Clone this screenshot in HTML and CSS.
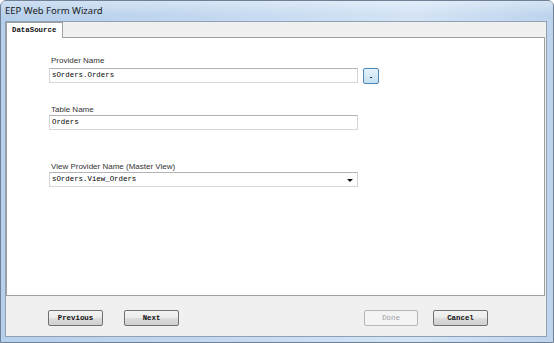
FILE: index.html
```html
<!DOCTYPE html>
<html>
<head>
<meta charset="utf-8">
<link rel="stylesheet" href="styles.css">
</head>
<body>
<div class="window">
  <div class="titlebar">EEP Web Form Wizard</div>
  <div class="client">
    <div class="tabstrip">
      <div class="tab">DataSource</div>
    </div>
    <div class="page">
      <div class="field">
        <div class="label">Provider Name</div>
        <div class="row">
          <div class="input">sOrders.Orders</div>
          <div class="browse"><span class="dot"></span></div>
        </div>
      </div>
      <div class="field f2">
        <div class="label">Table Name</div>
        <div class="row">
          <div class="input">Orders</div>
        </div>
      </div>
      <div class="field f3">
        <div class="label">View Provider Name (Master View)</div>
        <div class="row">
          <div class="input select">sOrders.View_Orders<span class="arrow"></span></div>
        </div>
      </div>
    </div>
    <div class="footer">
      <div class="btn">Previous</div>
      <div class="btn next">Next</div>
      <div class="spacer"></div>
      <div class="btn disabled">Done</div>
      <div class="btn cancel">Cancel</div>
    </div>
  </div>
</div>
</body>
</html>
```

FILE: styles.css
```css
html, body {
  margin: 0;
  padding: 0;
  width: 554px;
  height: 343px;
  overflow: hidden;
  background: #ffffff;
}
.window {
  box-sizing: border-box;
  width: 554px;
  height: 343px;
  display: flex;
  flex-direction: column;
  border: 1px solid #6f8197;
  border-radius: 6px 6px 0 0;
  background: linear-gradient(90deg, #b6cfeb 0%, #c4d9f0 40%, #d4e4f5 75%, #bdd4ed 100%);
}
.titlebar {
  height: 20px;
  line-height: 20px;
  padding-left: 4px;
  font-family: "Noto Sans", "Open Sans", sans-serif;
  font-size: 9.5px;
  color: #1b1b1b;
  background: linear-gradient(180deg, rgba(255,255,255,0.35), rgba(255,255,255,0) 70%);
}
.client {
  flex: 1;
  margin: 0 6px 5px 4px;
  background: #f0f0f0;
  border: 1px solid #8fa1b5;
  display: flex;
  flex-direction: column;
}
.tabstrip {
  height: 15px;
  display: flex;
  align-items: flex-end;
}
.tab {
  box-sizing: border-box;
  height: 16px;
  width: 57px;
  margin-bottom: -1px;
  background: #ffffff;
  border: 1px solid #a0a0a0;
  border-bottom: none;
  font-family: "Liberation Mono", monospace;
  font-size: 7.4px;
  font-weight: bold;
  line-height: 15px;
  padding-left: 5px;
  color: #111;
  position: relative;
  z-index: 1;
}
.page {
  height: 259px;
  box-sizing: border-box;
  background: #ffffff;
  border: 1px solid #a0a0a0;
  margin-right: 1px;
  padding: 18px 0 0 42px;
}
.field {
  display: flex;
  flex-direction: column;
}
.f2 { margin-top: 21px; }
.f3 { margin-top: 32px; }
.label {
  font-family: "Liberation Sans", Arial, sans-serif;
  font-size: 8px;
  line-height: 10px;
  color: #333;
  padding-left: 2px;
}
.row {
  display: flex;
  align-items: center;
  gap: 5px;
}
.input {
  box-sizing: border-box;
  width: 309px;
  height: 15px;
  border: 1px solid #d6d6d6;
  border-top-color: #b4b4b4;
  font-family: "Liberation Mono", monospace;
  font-size: 7.4px;
  line-height: 13px;
  padding-left: 2px;
  color: #000;
  position: relative;
}
.select .arrow {
  position: absolute;
  right: 4px;
  top: 6px;
  width: 0;
  height: 0;
  border-left: 3px solid transparent;
  border-right: 3px solid transparent;
  border-top: 3px solid #111;
}
.browse {
  box-sizing: border-box;
  width: 16px;
  height: 16px;
  margin-top: 2px;
  border: 1px solid #4f87b4;
  border-radius: 2px;
  background: linear-gradient(180deg, #e6f3fb, #c4e0f3);
  display: flex;
  align-items: center;
  justify-content: center;
}
.dot {
  width: 2px;
  height: 1px;
  background: #333;
  margin-top: 2px;
}
.footer {
  flex: 1;
  display: flex;
  align-items: flex-start;
  padding: 14px 0 0 42px;
}
.spacer { flex: 1; }
.btn {
  box-sizing: border-box;
  width: 55px;
  height: 16px;
  border: 1px solid #707070;
  border-radius: 2px;
  background: linear-gradient(180deg, #f3f3f3 0%, #ebebeb 50%, #dddddd 51%, #cfcfcf 100%);
  font-family: "Liberation Mono", monospace;
  font-size: 7.4px;
  font-weight: bold;
  line-height: 14px;
  text-align: center;
  color: #111;
}
.next { margin-left: 21px; }
.disabled {
  width: 54px;
  border-color: #b5b5b5;
  background: #f4f4f4;
  color: #a0a0a0;
  font-weight: normal;
}
.cancel { margin-left: 15px; margin-right: 58px; }
```
